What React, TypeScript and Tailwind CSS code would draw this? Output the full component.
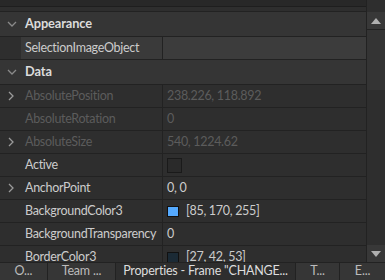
import React from "react";

const font = { fontFamily: "Lato, 'Open Sans', sans-serif" };

function ChevronDown() {
  return (
    <svg width="10" height="6" viewBox="0 0 10 6" className="block">
      <path d="M1 1 L5 5 L9 1" stroke="#8a8a8a" strokeWidth="1.3" fill="none" />
    </svg>
  );
}
function ChevronRight() {
  return (
    <svg width="6" height="10" viewBox="0 0 6 10" className="block">
      <path d="M1 1 L5 5 L1 9" stroke="#9a9a9a" strokeWidth="1.3" fill="none" />
    </svg>
  );
}

function Header({ label }: { label: string }) {
  return (
    <div className="flex items-center h-[25px] shrink-0 bg-[#353535] border-b border-[#222222]">
      <div className="w-[25px] flex justify-center pr-[1px]">
        <ChevronDown />
      </div>
      <span className="text-[12.8px] font-bold text-[#dcdcdc] tracking-[-0.1px]">{label}</span>
    </div>
  );
}

function Row({
  name,
  value,
  disabled,
  expand,
  children,
}: {
  name: string;
  value?: string;
  disabled?: boolean;
  expand?: boolean;
  children?: React.ReactNode;
}) {
  const c = disabled ? "text-[#5c5c5c]" : "text-[#cccccc]";
  return (
    <div className="flex h-[23px] shrink-0 border-b border-[#222222] bg-[#2e2e2e]">
      <div className="w-[163px] flex items-center border-r border-[#222222] shrink-0">
        <div className="w-[25px] flex justify-center pr-[4px]">{expand ? <ChevronRight /> : null}</div>
        <span className={`text-[12.5px] tracking-[-0.3px] whitespace-nowrap ${c}`}>{name}</span>
      </div>
      <div className="flex-1 flex items-center pl-[4px]">
        {children}
        {value !== undefined ? <span className={`text-[12.5px] tracking-[-0.3px] ${c}`}>{value}</span> : null}
      </div>
    </div>
  );
}

function Swatch({ color }: { color: string }) {
  return <div className="w-[12px] h-[11px] border border-[#111] mr-[7px]" style={{ background: color }} />;
}

export default function App() {
  return (
    <div className="w-[385px] h-[280px] overflow-hidden bg-[#2e2e2e] flex flex-col" style={font}>
      <div className="flex-1 flex min-h-0">
        <div className="flex-1 flex flex-col min-w-0 overflow-hidden">
          <div className="h-[7px] bg-[#282828] border-b border-[#1e1e1e] shrink-0" />
          <div className="h-[5px] bg-[#2e2e2e] border-b border-[#222222] shrink-0" />
          <Header label="Appearance" />
          <div className="flex h-[23px] border-b border-[#222222] shrink-0">
            <div className="w-[21px] bg-[#2e2e2e]" />
            <div className="w-[142px] bg-[#3a3a3a] flex items-center pl-[4px] border-r border-[#222222]">
              <span className="text-[12.5px] tracking-[-0.3px] text-[#cccccc]">SelectionImageObject</span>
            </div>
            <div className="flex-1 bg-[#3c3c3c]" />
          </div>
          <Header label="Data" />
          <Row name="AbsolutePosition" value="238.226, 118.892" disabled expand />
          <Row name="AbsoluteRotation" value="0" disabled />
          <Row name="AbsoluteSize" value="540, 1224.62" disabled expand />
          <Row name="Active">
            <div className="w-[15px] h-[15px] bg-[#2a2a2a] border border-[#1a1a1a]" />
          </Row>
          <Row name="AnchorPoint" value="0, 0" expand />
          <Row name="BackgroundColor3" value="[85, 170, 255]">
            <Swatch color="#55aaff" />
          </Row>
          <Row name="BackgroundTransparency" value="0" />
          <Row name="BorderColor3" value="[27, 42, 53]">
            <Swatch color="#1b2a35" />
          </Row>
        </div>
        <div className="w-[19px] shrink-0 flex flex-col border-l border-[#222222] bg-[#2e2e2e] pt-[12px]">
          <div className="h-[18px] bg-[#383838] border-b border-[#222222] flex items-center justify-center">
            <svg width="10" height="6" viewBox="0 0 10 6"><path d="M0 6 L5 0 L10 6 Z" fill="#b0b0b0" /></svg>
          </div>
          <div className="h-[60px] bg-[#343434]" />
          <div className="flex-1 bg-[#2e2e2e]" />
          <div className="h-[17px] bg-[#383838] flex items-center justify-center">
            <svg width="10" height="6" viewBox="0 0 10 6"><path d="M0 0 L5 6 L10 0 Z" fill="#b0b0b0" /></svg>
          </div>
        </div>
      </div>
      <div className="h-[18px] shrink-0 flex border-t border-[#222222] text-[12.5px] tracking-[-0.2px] text-[#bbbbbb]">
        <div className="w-[48px] bg-[#363636] border-r border-[#222222] flex items-center justify-center">O...</div>
        <div className="w-[68px] bg-[#363636] border-r border-[#222222] flex items-center justify-center">Team ...</div>
        <div className="w-[179px] bg-[#2e2e2e] flex items-center justify-center text-[#dddddd] whitespace-nowrap">Properties - Frame "CHANGE...</div>
        <div className="w-[45px] bg-[#363636] border-x border-[#222222] flex items-center justify-center">T...</div>
        <div className="flex-1 bg-[#363636] flex items-center justify-center">E...</div>
      </div>
    </div>
  );
}
